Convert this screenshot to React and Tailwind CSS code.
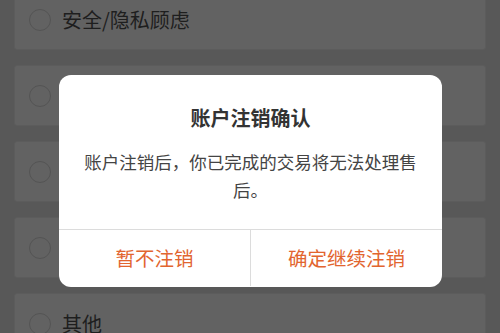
export default function App() {
  const items = ["安全/隐私顾虑", "", "", "", "其他"];
  return (
    <div
      className="relative h-[333px] w-[500px] overflow-hidden bg-[#585858]"
      style={{ fontFamily: '"Noto Sans CJK SC", "Noto Sans", sans-serif' }}
    >
      <div className="mt-[-11px] flex flex-col gap-[15px] px-[14px]">
        {items.map((t, i) => (
          <div
            key={i}
            className="flex h-[61px] items-center rounded-[3px] border border-[#5c5c5c] bg-[#626262] pl-[14px]"
          >
            <div className="h-[22px] w-[22px] rounded-full border-[1.5px] border-[#545454]" />
            <span className="ml-[11px] text-[20px] leading-none text-[#1e1e1e]">{t}</span>
          </div>
        ))}
      </div>

      <div className="absolute left-[59px] top-[75px] flex h-[212px] w-[383px] flex-col overflow-hidden rounded-[12px] bg-white">
        <div className="pt-[29px] text-center text-[20px] font-bold leading-[28px] text-[#333]">
          账户注销确认
        </div>
        <div className="mt-[16px] px-[22px] pb-[25px] text-center text-[17.5px] leading-[28px] text-[#444]">
          账户注销后，你已完成的交易将无法处理售后。
        </div>
        <div className="flex h-[57px] border-t border-[#dcdcdc]">
          <div className="flex flex-1 items-center justify-center border-r border-[#dcdcdc] text-[19.5px] text-[#e2652f]">
            暂不注销
          </div>
          <div className="flex flex-1 items-center justify-center text-[19.5px] text-[#e2652f]">
            确定继续注销
          </div>
        </div>
      </div>
    </div>
  );
}
